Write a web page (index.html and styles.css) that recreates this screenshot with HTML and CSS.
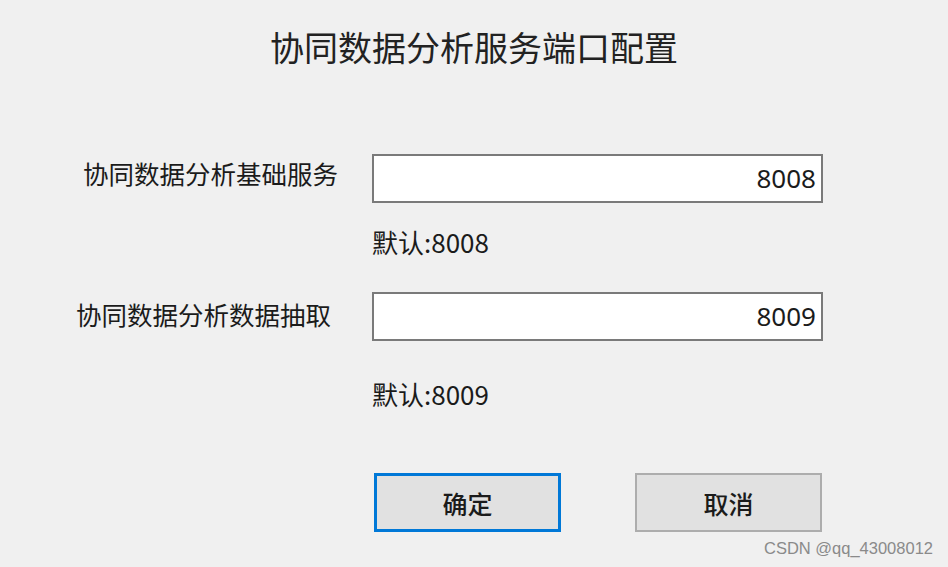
FILE: index.html
```html
<!DOCTYPE html>
<html lang="zh-CN">
<head>
<meta charset="utf-8">
<title>协同数据分析服务端口配置</title>
<link rel="stylesheet" href="styles.css">
</head>
<body>
<div class="dialog">
  <h1 class="title">协同数据分析服务端口配置</h1>
  <div class="field field-1">
    <label class="label label-1">协同数据分析基础服务</label>
    <div class="input">8008</div>
  </div>
  <div class="hint hint-1">默认:8008</div>
  <div class="field field-2">
    <label class="label label-2">协同数据分析数据抽取</label>
    <div class="input">8009</div>
  </div>
  <div class="hint hint-2">默认:8009</div>
  <div class="buttons">
    <button class="btn btn-primary">确定</button>
    <button class="btn">取消</button>
  </div>
  <div class="watermark">CSDN @qq_43008012</div>
</div>
</body>
</html>
```

FILE: styles.css
```css
html, body {
  margin: 0;
  padding: 0;
  background: #f0f0f0;
}
body {
  width: 948px;
  height: 567px;
  overflow: hidden;
  font-family: "Noto Sans CJK SC", "Noto Sans", sans-serif;
  color: #1b1b1b;
}
.dialog {
  padding-top: 22px;
}
.title {
  margin: 0;
  font-size: 34px;
  font-weight: 400;
  line-height: 50px;
  text-align: center;
  color: #222;
}
.field {
  display: grid;
  grid-template-columns: 372px 451px;
  align-items: center;
  height: 49px;
}
.field-1 { margin-top: 82px; }
.field-2 { margin-top: 35px; }
.label {
  font-size: 25.5px;
  line-height: 30px;
  white-space: nowrap;
  margin-top: -12px;
}
.label-1 { padding-left: 83px; }
.label-2 { padding-left: 76px; margin-top: -6px; }
.input {
  box-sizing: border-box;
  height: 49px;
  background: #fff;
  border: 2px solid #7a7a7a;
  font-family: "Noto Sans", "Noto Sans CJK SC", sans-serif;
  font-size: 26px;
  line-height: 45px;
  text-align: right;
  padding-right: 5px;
}
.hint {
  padding-left: 372px;
  font-size: 26px;
  line-height: 30px;
  font-family: "Noto Sans CJK SC", sans-serif;
}
.hint-1 { margin-top: 24px; }
.hint-2 { margin-top: 38px; }
.buttons {
  display: flex;
  gap: 74px;
  padding-left: 374px;
  margin-top: 64px;
}
.btn {
  box-sizing: border-box;
  width: 187px;
  height: 59px;
  background: #e1e1e1;
  border: 2px solid #adadad;
  font-family: "Noto Sans CJK SC", sans-serif;
  font-size: 25px;
  font-weight: 500;
  color: #1b1b1b;
  padding: 0;
}
.btn-primary {
  border: 3px solid #0078d7;
}
.watermark {
  text-align: right;
  padding-right: 15px;
  margin-top: 7px;
  font-family: "Liberation Sans", sans-serif;
  font-size: 16.5px;
  color: #8a8a8a;
}
```
